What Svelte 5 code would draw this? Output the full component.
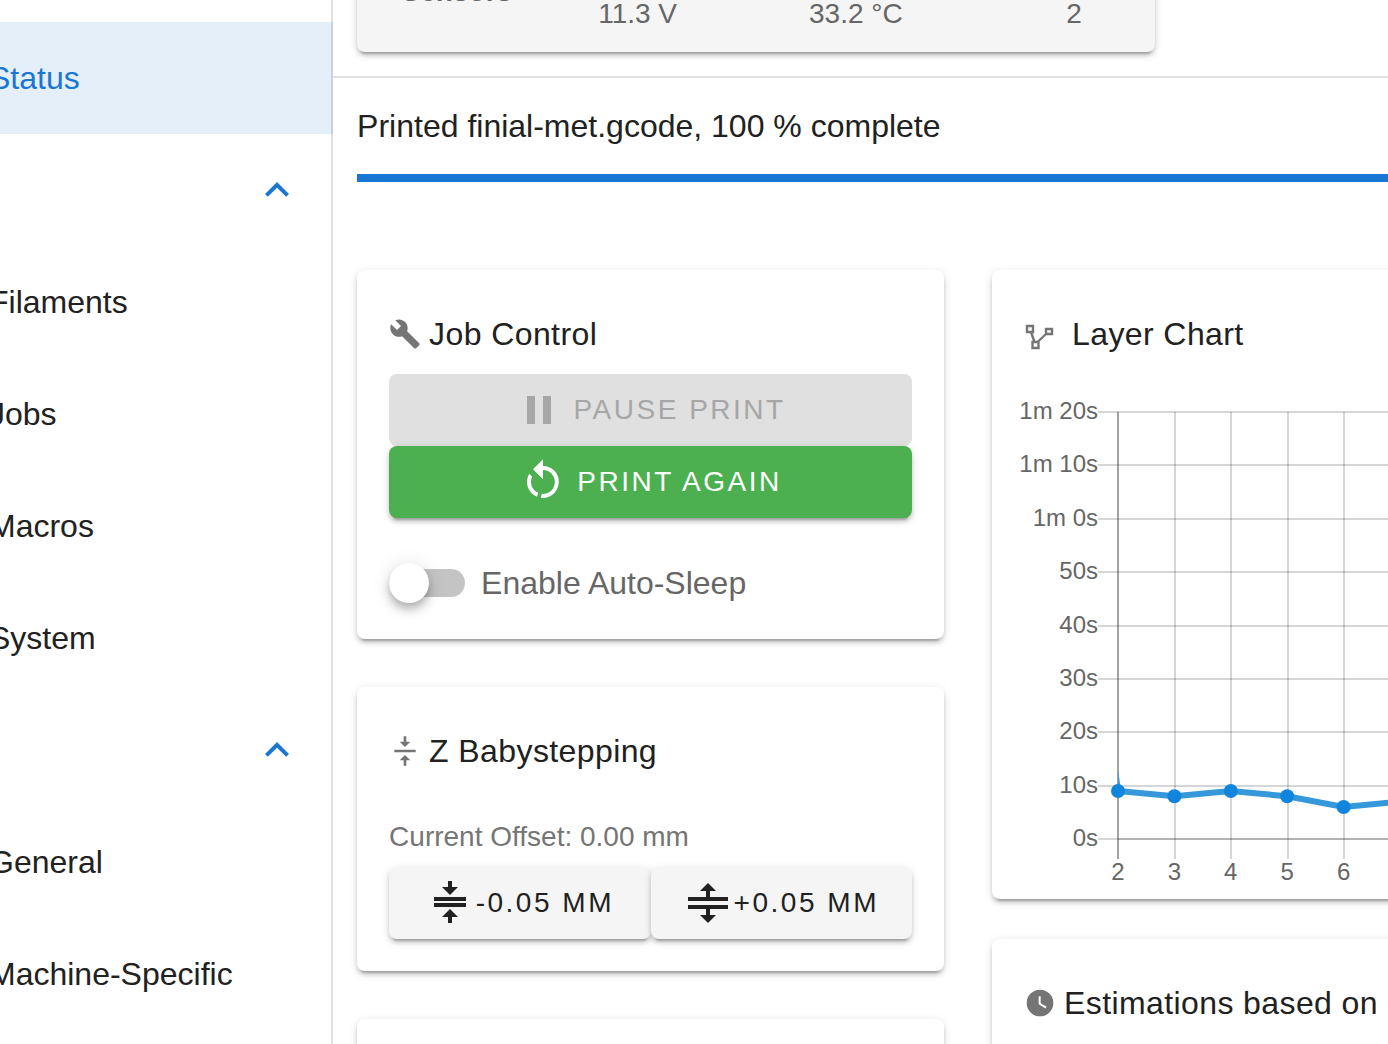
<script>
	const general = ['Filaments', 'Jobs', 'Macros', 'System'];
	const settings = ['General', 'Machine-Specific'];

	const icons = {
		chevron: 'M7.41,15.41L12,10.83L16.59,15.41L18,14L12,8L6,14L7.41,15.41Z',
		wrench:
			'M22.7,19L13.6,9.9C14.5,7.6 14,4.9 12.1,3C10.1,1 7.1,0.6 4.7,1.7L9,6L6,9L1.6,4.7C0.4,7.1 0.9,10.1 2.9,12.1C4.8,14 7.5,14.5 9.8,13.6L18.9,22.7C19.3,23.1 19.9,23.1 20.3,22.7L22.6,20.4C23.1,20 23.1,19.3 22.7,19Z',
		pause: 'M14,19H18V5H14M6,19H10V5H6V19Z',
		restart:
			'M12,4C14.1,4 16.1,4.8 17.6,6.3C20.7,9.4 20.7,14.5 17.6,17.6C15.8,19.5 13.3,20.2 10.9,19.9L11.4,17.9C13.1,18.1 14.9,17.5 16.2,16.2C18.5,13.9 18.5,10.1 16.2,7.7C15.1,6.6 13.5,6 12,6V10.6L7,5.6L12,0.6V4M6.3,17.6C3.7,15 3.3,11 5.1,7.9L6.6,9.4C5.5,11.6 5.9,14.4 7.8,16.2C8.3,16.7 8.9,17.1 9.6,17.4L9,19.4C8,19 7.1,18.4 6.3,17.6Z',
		align: 'M8,19H11V23H13V19H16L12,15L8,19M16,5H13V1H11V5H8L12,9L16,5M4,11V13H20V11H4Z',
		collapse:
			'M4,12H20V14H4V12M4,9H20V11H4V9M16,4L12,8L8,4H11V1H13V4H16M8,19L12,15L16,19H13V22H11V19H8Z',
		split:
			'M8,18H11V15H2V13H22V15H13V18H16L12,22L8,18M12,2L8,6H11V9H2V11H22V9H13V6H16L12,2Z',
		clock:
			'M12,2A10,10 0 0,0 2,12A10,10 0 0,0 12,22A10,10 0 0,0 22,12A10,10 0 0,0 12,2M16.2,16.2L11,13V7H12.5V12.2L17,14.9L16.2,16.2Z'
	};

	let autoSleep = false;

	// Chart geometry
	const left = 110;
	const top = 30;
	const bottom = 457;
	const stepX = 56.4;
	const stepY = (bottom - top) / 8;

	const times = ['1m 20s', '1m 10s', '1m 0s', '50s', '40s', '30s', '20s', '10s', '0s'];
	const rows = times.map((time, i) => ({ time, y: top + Math.round(i * stepY) }));

	const layers = [
		{ layer: 2, seconds: 9 },
		{ layer: 3, seconds: 8 },
		{ layer: 4, seconds: 9 },
		{ layer: 5, seconds: 8 },
		{ layer: 6, seconds: 6 },
		{ layer: 7, seconds: 7 }
	];

	const points = layers.map((item, i) => ({
		x: left + i * stepX,
		y: bottom - (item.seconds * stepY) / 10,
		layer: item.layer
	}));
	const line = points.map((p) => `${p.x},${p.y}`).join(' ');
</script>

<div class="app">
	<aside>
		<nav>
			<a class="item active" href="#status">Status</a>
			<button class="group" aria-label="Toggle group">
				<svg class="large" viewBox="0 0 24 24"><path d={icons.chevron} /></svg>
			</button>
			{#each general as name}
				<a class="item" href="#{name}">{name}</a>
			{/each}
			<button class="group" aria-label="Toggle settings">
				<svg class="large" viewBox="0 0 24 24"><path d={icons.chevron} /></svg>
			</button>
			{#each settings as name}
				<a class="item" href="#{name}">{name}</a>
			{/each}
		</nav>
	</aside>

	<main>
		<header>
			<div class="card sensors">
				<table>
					<tbody>
						<tr>
							<th scope="row">Sensors</th>
							<td class="narrow">11.3 V</td>
							<td>33.2 °C</td>
							<td class="narrow">2</td>
						</tr>
					</tbody>
				</table>
			</div>
		</header>

		<div class="content">
			<p class="progress-text">Printed finial-met.gcode, 100 % complete</p>
			<div class="progress" role="progressbar" aria-valuenow="100" aria-label="Print progress">
				<div class="progress-value" style="width: 100%"></div>
			</div>

			<div class="columns">
				<div class="column">
					<section class="card">
						<h2><svg viewBox="0 0 24 24"><path d={icons.wrench} /></svg>Job Control</h2>
						<div class="job-buttons">
							<button class="btn" disabled>
								<svg class="large" viewBox="0 0 24 24"><path d={icons.pause} /></svg>Pause Print
							</button>
							<button class="btn success">
								<svg class="large" viewBox="0 0 24 24"><path d={icons.restart} /></svg>Print Again
							</button>
						</div>
						<label class="switch">
							<input type="checkbox" bind:checked={autoSleep} />
							Enable Auto-Sleep
						</label>
					</section>

					<section class="card">
						<h2><svg viewBox="0 0 24 24"><path d={icons.align} /></svg>Z Babystepping</h2>
						<p class="offset">Current Offset: 0.00 mm</p>
						<div class="steps">
							<button class="btn">
								<svg class="large" viewBox="0 0 24 24"><path d={icons.collapse} /></svg>-0.05 mm
							</button>
							<button class="btn">
								<svg class="large" viewBox="0 0 24 24"><path d={icons.split} /></svg>+0.05 mm
							</button>
						</div>
					</section>

					<section class="card next"></section>
				</div>

				<div class="column right">
					<section class="card chart-card">
						<h2 class="wide">
							<svg class="vector" viewBox="0 0 32 32">
								<path d="M3,8H9V14H3ZM22,11H28V16H22ZM8.5,24H14.5V30H8.5ZM7,14L10.5,24M22,16L13.5,24" />
							</svg>Layer Chart
						</h2>
						<svg class="chart" role="img" aria-label="Layer Chart">
							<g class="grid">
								{#each rows as row}
									<line x1="90" x2="100%" y1={row.y} y2={row.y} />
									<text class="time" x="90" y={row.y + 7}>{row.time}</text>
								{/each}
								{#each points as point, i}
									<line class:axis={i === 0} x1={Math.ceil(point.x)} x2={Math.ceil(point.x)} y1={top} y2={bottom + 20} />
									<text class="layer" x={point.x} y="498">{point.layer}</text>
								{/each}
								<line x1={left} x2="100%" y1={bottom} y2={bottom} />
							</g>
							<path class="spike" d="M110,387L113,409H110Z" />
							<polyline class="line" points={line} />
							{#each points as point}
								<circle cx={point.x} cy={point.y} r="7" />
							{/each}
						</svg>
					</section>

					<section class="card next">
						<h2><svg viewBox="0 0 24 24"><path d={icons.clock} /></svg>Estimations based on</h2>
					</section>
				</div>
			</div>
		</div>
	</main>
</div>

<style>
	:global(body) {
		background: #fff;
		color: #212121;
		font-family: 'Liberation Sans', Arial, sans-serif;
		font-size: 32px;
	}
	.app {
		display: flex;
		height: 100vh;
		overflow: hidden;
	}
	svg {
		width: 32px;
		height: 32px;
		flex: none;
		fill: currentColor;
	}
	svg.large {
		width: 48px;
		height: 48px;
	}

	/* Sidebar, partly scrolled out of view */
	aside {
		position: relative;
		flex: none;
		width: 24%;
		overflow: hidden;
	}
	aside::after {
		content: '';
		position: absolute;
		inset: 0 0 0 auto;
		width: 2px;
		background: rgba(0, 0, 0, 0.12);
	}
	nav {
		display: flex;
		flex-direction: column;
		margin-left: -11px;
		padding-top: 22px;
	}
	.item,
	.group {
		display: flex;
		align-items: center;
		flex: none;
		height: 112px;
		color: inherit;
		text-decoration: none;
	}
	.active {
		background: #e4eff9;
		color: #1976d2;
	}
	.group {
		justify-content: flex-end;
		padding: 0 32px;
		border: none;
		background: none;
		color: #1976d2;
	}

	main {
		flex: 1;
		min-width: 0;
	}
	header {
		padding: 0 24px 24px;
		border-bottom: 2px solid #e0e0e0;
	}
	.card {
		padding: 32px;
		border-radius: 8px;
		background: #fff;
		box-shadow:
			0 6px 2px -4px rgba(0, 0, 0, 0.2),
			0 4px 4px 0 rgba(0, 0, 0, 0.14),
			0 2px 10px 0 rgba(0, 0, 0, 0.12);
	}
	.sensors {
		max-width: 798px;
		margin-top: -24px;
		padding: 0 0 22px;
		background: #f5f5f5;
	}
	table {
		width: 100%;
		table-layout: fixed;
		border-collapse: collapse;
		color: #666;
		font-size: 28px;
		line-height: 32px;
	}
	tr {
		height: 54px;
	}
	th,
	td {
		padding: 0;
		text-align: center;
		vertical-align: bottom;
	}
	th {
		width: 25%;
		vertical-align: top;
	}
	.narrow {
		width: 162px;
	}

	.content {
		padding: 24px 0 0 24px;
	}
	p {
		margin: 0;
	}
	.progress-text {
		line-height: 48px;
	}
	.progress {
		height: 8px;
		margin-top: 24px;
	}
	.progress-value {
		height: 100%;
		background: #1976d2;
	}
	.columns {
		display: grid;
		grid-template-columns: 587fr 396fr;
		gap: 48px;
		align-items: start;
		margin-top: 88px;
	}
	.column {
		display: flex;
		flex-direction: column;
		gap: 48px;
		min-width: 0;
	}
	.right {
		gap: 40px;
		margin-right: -24px;
	}
	.next {
		min-height: 160px;
	}
	h2 {
		display: flex;
		align-items: center;
		gap: 8px;
		margin: 0;
		font-size: 32px;
		font-weight: normal;
		letter-spacing: 0.0125em;
		line-height: 64px;
		white-space: nowrap;
	}
	h2.wide {
		gap: 16px;
	}
	h2 svg {
		color: #757575;
	}
	.vector {
		fill: none;
		stroke: currentColor;
		stroke-width: 2.4;
	}

	.btn {
		display: flex;
		align-items: center;
		justify-content: center;
		gap: 10px;
		width: 100%;
		height: 72px;
		padding: 0;
		border: none;
		border-radius: 8px;
		background: #f5f5f5;
		color: #212121;
		font-family: inherit;
		font-size: 28px;
		letter-spacing: 0.09em;
		text-transform: uppercase;
		white-space: nowrap;
		box-shadow:
			0 6px 2px -4px rgba(0, 0, 0, 0.2),
			0 4px 4px 0 rgba(0, 0, 0, 0.14),
			0 2px 10px 0 rgba(0, 0, 0, 0.12);
	}
	.btn:disabled {
		background: #e0e0e0;
		color: #a6a6a6;
		box-shadow: none;
	}
	.btn.success {
		background: #4caf50;
		color: #fff;
	}
	.job-buttons {
		margin-top: 8px;
	}
	.switch {
		display: flex;
		align-items: center;
		gap: 16px;
		height: 48px;
		margin-top: 41px;
		color: #666;
	}
	.switch input {
		position: relative;
		appearance: none;
		width: 76px;
		height: 28px;
		margin: 0;
		border-radius: 14px;
		background: #c4c4c4;
	}
	.switch input::before {
		content: '';
		position: absolute;
		top: -6px;
		left: 0;
		width: 40px;
		height: 40px;
		border-radius: 50%;
		background: #fff;
		box-shadow:
			0 4px 8px -2px rgba(0, 0, 0, 0.2),
			0 8px 10px 0 rgba(0, 0, 0, 0.14),
			0 2px 20px 0 rgba(0, 0, 0, 0.12);
	}
	.switch input:checked::before {
		left: 36px;
		background: #1976d2;
	}
	.offset {
		margin: 32px 0 8px;
		color: #757575;
		font-size: 28px;
		line-height: 44px;
	}
	.steps {
		display: flex;
	}
	.steps .btn {
		gap: 2px;
	}

	.chart-card {
		padding: 32px 0 16px 16px;
	}
	.chart-card h2 {
		padding-left: 16px;
	}
	.chart {
		display: block;
		width: 100%;
		height: 501px;
		margin-top: 16px;
	}
	.grid line {
		stroke: rgba(0, 0, 0, 0.16);
		stroke-width: 2;
	}
	.grid .axis {
		stroke: rgba(0, 0, 0, 0.36);
	}
	.grid text {
		fill: #666;
		font-size: 24px;
	}
	.time {
		text-anchor: end;
	}
	.layer {
		text-anchor: middle;
	}
	.line {
		fill: none;
		stroke: #3598db;
		stroke-width: 6;
	}
	.spike {
		fill: #3598db;
	}
	circle {
		fill: #1185de;
	}
</style>
